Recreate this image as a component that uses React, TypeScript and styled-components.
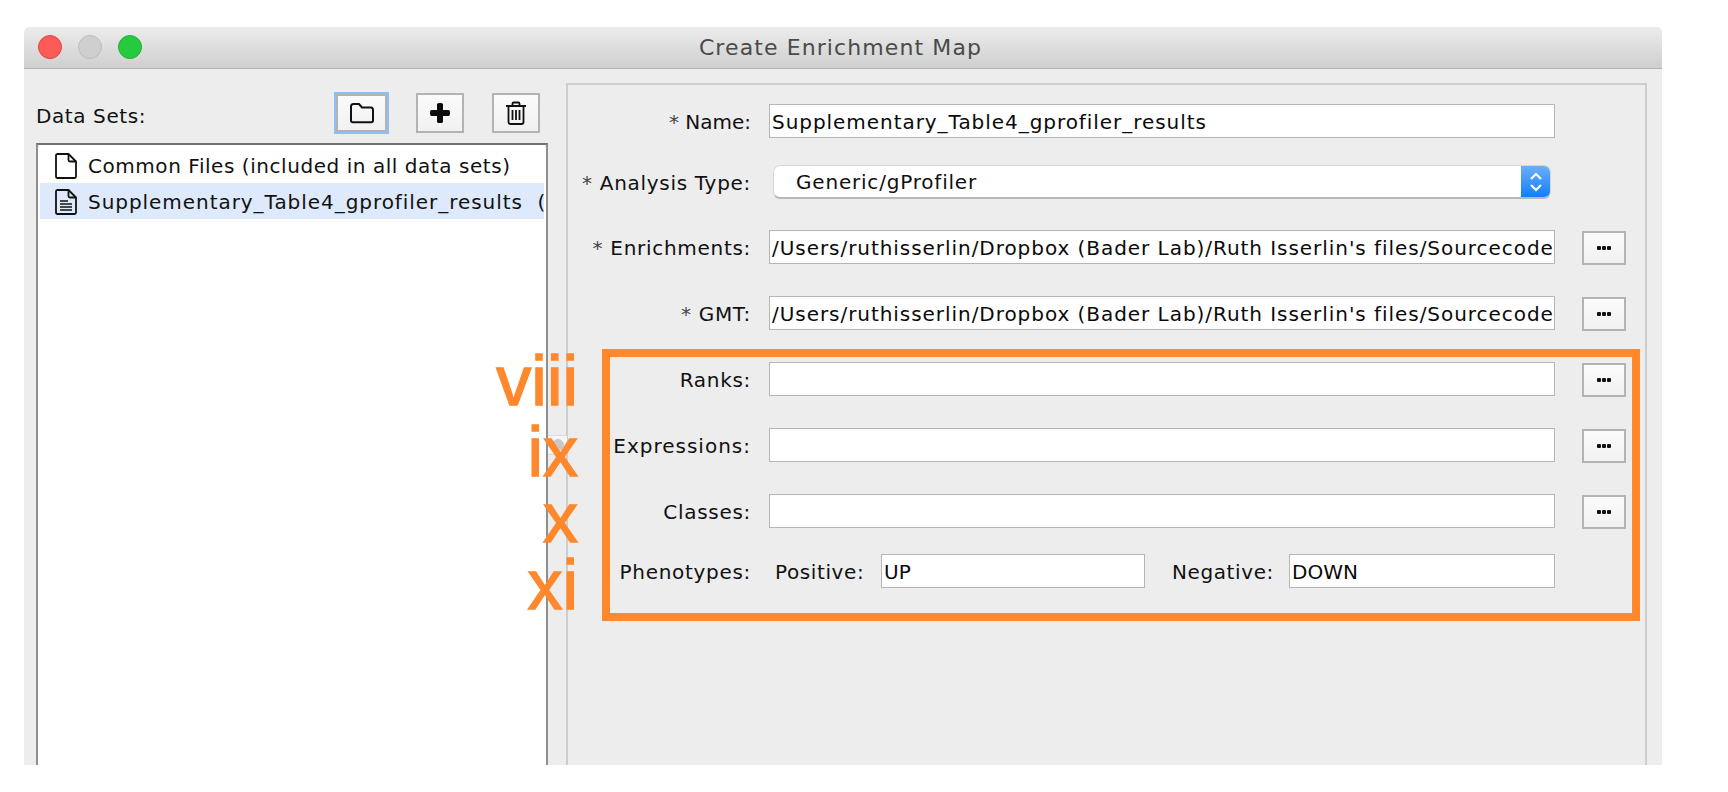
import React from 'react';
import styled, { createGlobalStyle } from 'styled-components';

const FONT = `"DejaVu Sans", sans-serif`;
const ORANGE = '#ff882c';
const PATH = "/Users/ruthisserlin/Dropbox (Bader Lab)/Ruth Isserlin's files/Sourcecode";

const Global = createGlobalStyle`
  html, body { margin: 0; padding: 0; background: #fff; }
  body { width: 1728px; height: 792px; overflow: hidden; font-family: ${FONT}; }
`;

const Page = styled.div`
  padding: 27px 0 0 24px;
  width: 1638px;
`;

const Frame = styled.div`
  position: relative;
  width: 1638px;
  height: 738px;
  background: #ededed;
  display: flex;
  flex-direction: column;
  border-radius: 6px 6px 0 0;
  overflow: hidden;
`;

const TitleBar = styled.div`
  flex: none;
  height: 41px;
  border-bottom: 1px solid #b4b4b4;
  background: linear-gradient(#ececec, #cfcfcf);
  position: relative;
  display: flex;
  align-items: center;
  justify-content: center;
  padding-right: 5px;
  font-size: 22px;
  letter-spacing: 1.1px;
  color: #4a4a4a;
`;

const Lights = styled.div`
  position: absolute;
  left: 14px;
  top: 8px;
  display: flex;
  gap: 16px;
`;

const Light = styled.span<{ $fill: string; $edge: string }>`
  width: 24px;
  height: 24px;
  box-sizing: border-box;
  border-radius: 50%;
  background: ${p => p.$fill};
  border: 1px solid ${p => p.$edge};
`;

const Body = styled.div`
  flex: 1;
  display: flex;
  min-height: 0;
`;

const Left = styled.div`
  flex: none;
  width: 524px;
  padding: 23px 0 0 12px;
  box-sizing: border-box;
  display: flex;
  flex-direction: column;
`;

const ListHeader = styled.div`
  height: 51px;
  display: flex;
  align-items: flex-start;
  font-size: 20px;
  letter-spacing: 0.6px;
  color: #111;
`;

const HeaderLabel = styled.span`
  flex: none;
  width: 300px;
  margin-top: 12px;
  line-height: 24px;
  white-space: nowrap;
`;

const IconButton = styled.button<{ $focus?: boolean }>`
  box-sizing: border-box;
  flex: none;
  padding: 0;
  display: flex;
  align-items: center;
  justify-content: center;
  width: ${p => (p.$focus ? 51 : 48)}px;
  height: ${p => (p.$focus ? 38 : 40)}px;
  margin-top: ${p => (p.$focus ? 2 : 1)}px;
  margin-right: ${p => (p.$focus ? 29 : 28)}px;
  background: linear-gradient(#fbfbfb, #f1f1f1);
  border: 2px solid #b3b3b3;
  box-shadow: ${p => (p.$focus ? '0 0 0 2px #8fbdf5' : 'none')};
`;

const List = styled.div`
  flex: 1;
  box-sizing: border-box;
  background: #fff;
  border: 2px solid #8f8f8f;
  border-top-color: #707070;
  border-bottom: 0;
  padding: 2px 2px 0;
  overflow: hidden;
`;

const ListRow = styled.div<{ $selected?: boolean }>`
  box-sizing: border-box;
  height: 36px;
  display: flex;
  align-items: center;
  gap: 11px;
  padding: 2px 0 0 15px;
  font-size: 20px;
  letter-spacing: ${p => (p.$selected ? 0.95 : 0.55)}px;
  white-space: pre;
  color: #111;
  overflow: hidden;
  background: ${p => (p.$selected ? '#deeafb' : 'transparent')};
`;

const Panel = styled.div`
  flex: none;
  margin: 14px 0 0 18px;
  width: 1081px;
  box-sizing: border-box;
  border: 2px solid #cdcdcd;
  border-bottom: 0;
  position: relative;
`;

const Rows = styled.div`
  display: flex;
  flex-direction: column;
`;

const Row = styled.div<{ $top: number }>`
  display: flex;
  align-items: center;
  height: 34px;
  margin-top: ${p => p.$top}px;
  font-size: 20px;
  color: #111;
`;

const Label = styled.label<{ $track?: number }>`
  flex: none;
  box-sizing: border-box;
  width: 183px;
  padding-top: 2px;
  text-align: right;
  white-space: pre;
  margin-right: 18px;
  letter-spacing: ${p => p.$track ?? 0.7}px;
`;

const Star = styled.span`
  color: #444;
`;

const Field = styled.div<{ $width: number; $track?: number }>`
  flex: none;
  box-sizing: border-box;
  width: ${p => p.$width}px;
  height: 34px;
  background: #fff;
  border: 1px solid #b5b5b5;
  padding: 0 2px;
  line-height: 34px;
  letter-spacing: ${p => p.$track ?? 0}px;
  white-space: pre;
  overflow: hidden;
  color: #0a0a0a;
`;

const Combo = styled.div`
  flex: none;
  margin-left: 4px;
  box-sizing: border-box;
  width: 778px;
  height: 34px;
  background: #fff;
  border: 1px solid #d6d6d6;
  border-bottom: 2px solid #b8b8b8;
  border-radius: 7px;
  display: flex;
  align-items: center;
  justify-content: space-between;
  padding-left: 22px;
  letter-spacing: 0.8px;
  overflow: hidden;
`;

const ComboArrow = styled.div`
  width: 29px;
  height: 34px;
  flex: none;
  background: linear-gradient(#6fb0f7, #0a7bff);
  display: flex;
  align-items: center;
  justify-content: center;
`;

const Browse = styled.button`
  flex: none;
  box-sizing: border-box;
  width: 44px;
  height: 34px;
  margin: 1px 0 0 27px;
  padding: 0;
  background: linear-gradient(#fbfbfb, #f1f1f1);
  border: 2px solid #b3b3b3;
  display: flex;
  align-items: center;
  justify-content: center;
  gap: 1px;
`;

const Dot = styled.i`
  width: 4px;
  height: 4px;
  background: #111;
  border-radius: 1px;
`;

const SubLabel = styled.span<{ $left: number; $width: number }>`
  flex: none;
  box-sizing: border-box;
  padding-top: 2px;
  margin-left: ${p => p.$left}px;
  width: ${p => p.$width}px;
  white-space: pre;
  letter-spacing: 0.6px;
`;

const Highlight = styled.div`
  position: absolute;
  left: 578px;
  top: 322px;
  width: 1038px;
  height: 272px;
  box-sizing: border-box;
  border: 8px solid ${ORANGE};
  pointer-events: none;
`;

const Numeral = styled.span<{ $bottom: number }>`
  position: absolute;
  right: 1084px;
  top: ${p => p.$bottom - 27 - 63}px;
  font-family: "Liberation Sans", Arial, sans-serif;
  font-size: 70px;
  line-height: 80px;
  color: ${ORANGE};
  -webkit-text-stroke: 1.4px ${ORANGE};
`;

const Grip = styled.div`
  position: absolute;
  left: 524px;
  top: 408px;
  width: 19px;
  height: 20px;
  box-sizing: border-box;
  background: #f6f6f6;
  border: 1px solid #dcdcdc;
  border-width: 1px 0;
  display: flex;
  align-items: center;
  justify-content: center;

  &::after {
    content: '';
    width: 12px;
    height: 12px;
    border-radius: 50%;
    background: #c8c8c8;
  }
`;

const FolderIcon = () => (
  <svg width="26" height="22" viewBox="0 0 26 22" fill="none" stroke="#111" strokeWidth="2">
    <path d="M2 4.500C2 3 3 2 4.500 2h5.500l3 3.500h9C23 5.500 24 6.500 24 8v10.500c0 1-.8 1.800-1.800 1.800H3.800C2.800 20.300 2 19.500 2 18.500z" strokeLinejoin="round" />
  </svg>
);

const PlusIcon = () => (
  <svg width="22" height="22" viewBox="0 0 22 22">
    <path d="M8 2.500c0-1 1-1.500 3-1.500s3 .5 3 1.500V8h5.500c1 0 1.500 1 1.500 3s-.5 3-1.500 3H14v5.500c0 1-1 1.500-3 1.500s-3-.5-3-1.500V14H2.500C1.500 14 1 13 1 11s.5-3 1.500-3H8z" fill="#0c0c0c" />
  </svg>
);

const TrashIcon = () => (
  <svg width="22" height="24" viewBox="0 0 22 24" fill="none" stroke="#111" strokeWidth="1.800">
    <path d="M1 5h20M7.500 5V2.800c0-.8.5-1.300 1.300-1.300h4.400c.8 0 1.300.5 1.300 1.300V5" />
    <path d="M3.500 5v16c0 1.200.8 2 2 2h11c1.200 0 2-.8 2-2V5" />
    <path d="M7.500 9v10M11 9v10M14.500 9v10" />
  </svg>
);

const FileIcon = ({ lines }: { lines?: boolean }) => (
  <svg width="22" height="26" viewBox="0 0 22 26" fill="none" stroke="#111" strokeWidth="1.800" style={{ flex: 'none' }}>
    <path d="M2.500 1h11L21 8.500V23.500c0 .8-.6 1.500-1.500 1.500h-17C1.700 25 1 24.300 1 23.500V2.500C1 1.700 1.700 1 2.500 1z" strokeLinejoin="round" />
    <path d="M13.500 1v6c0 1 .5 1.500 1.500 1.500h6" />
    {lines && <path d="M5 12h8M5 15h12M5 18h12M5 21h12" strokeWidth="1.400" />}
  </svg>
);

const BrowseButton = () => (
  <Browse>
    <Dot />
    <Dot />
    <Dot />
  </Browse>
);

const Required = ({ text, track }: { text: string; track?: number }) => (
  <Label $track={track}>
    <Star>* </Star>
    {text}
  </Label>
);

const App: React.FC = () => (
  <Page>
    <Global />
    <Frame>
      <TitleBar>
        <Lights>
          <Light $fill="#fc5b57" $edge="#e5453f" />
          <Light $fill="#cfcfcf" $edge="#bdbdbd" />
          <Light $fill="#27c93f" $edge="#1fb232" />
        </Lights>
        Create Enrichment Map
      </TitleBar>
      <Body>
        <Left>
          <ListHeader>
            <HeaderLabel>Data Sets:</HeaderLabel>
            <IconButton $focus>
              <FolderIcon />
            </IconButton>
            <IconButton>
              <PlusIcon />
            </IconButton>
            <IconButton>
              <TrashIcon />
            </IconButton>
          </ListHeader>
          <List>
            <ListRow>
              <FileIcon />
              Common Files (included in all data sets)
            </ListRow>
            <ListRow $selected>
              <FileIcon lines />
              {'Supplementary_Table4_gprofiler_results  ('}
            </ListRow>
          </List>
        </Left>
        <Panel>
          <Rows>
            <Row $top={19}>
              <Required text="Name:" track={0} />
              <Field $width={786} $track={0.95}>Supplementary_Table4_gprofiler_results</Field>
            </Row>
            <Row $top={27}>
              <Required text="Analysis Type:" />
              <Combo>
                Generic/gProfiler
                <ComboArrow>
                  <svg width="14" height="24" viewBox="0 0 14 24" fill="none" stroke="#fff" strokeWidth="2.200">
                    <path d="M2 9l5-5 5 5M2 15l5 5 5-5" />
                  </svg>
                </ComboArrow>
              </Combo>
            </Row>
            <Row $top={31}>
              <Required text="Enrichments:" />
              <Field $width={786} $track={0.95}>{PATH}</Field>
              <BrowseButton />
            </Row>
            <Row $top={32}>
              <Required text="GMT:" />
              <Field $width={786} $track={0.95}>{PATH}</Field>
              <BrowseButton />
            </Row>
            <Row $top={32}>
              <Label>Ranks:</Label>
              <Field $width={786} />
              <BrowseButton />
            </Row>
            <Row $top={32}>
              <Label $track={1}>Expressions:</Label>
              <Field $width={786} />
              <BrowseButton />
            </Row>
            <Row $top={32}>
              <Label>Classes:</Label>
              <Field $width={786} />
              <BrowseButton />
            </Row>
            <Row $top={26}>
              <Label>Phenotypes:</Label>
              <SubLabel $left={6} $width={106}>Positive:</SubLabel>
              <Field $width={264}>UP</Field>
              <SubLabel $left={27} $width={117}>Negative:</SubLabel>
              <Field $width={266}>DOWN</Field>
            </Row>
          </Rows>
        </Panel>
      </Body>
      <Grip />
      <Highlight />
      <Numeral $bottom={404}>viii</Numeral>
      <Numeral $bottom={475}>ix</Numeral>
      <Numeral $bottom={541}>x</Numeral>
      <Numeral $bottom={608}>xi</Numeral>
    </Frame>
  </Page>
);

export default App;
